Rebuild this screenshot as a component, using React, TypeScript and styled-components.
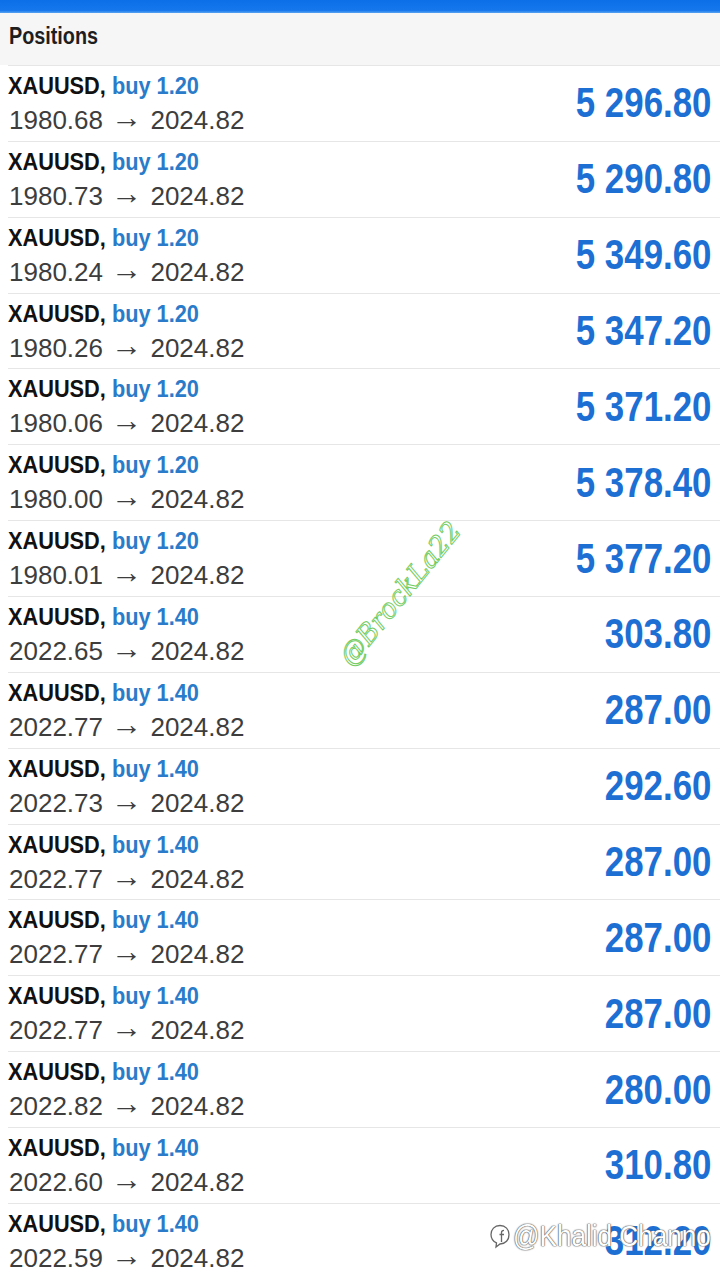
import React from "react";
import styled, { createGlobalStyle } from "styled-components";

const GlobalStyle = createGlobalStyle`
  html, body {
    margin: 0;
    padding: 0;
    background: #ffffff;
    font-family: "Liberation Sans", Arial, sans-serif;
  }
  #root { width: 720px; height: 1280px; overflow: hidden; }
`;

const Screen = styled.div`
  position: relative;
  width: 720px;
  height: 1280px;
  overflow: hidden;
  background: #ffffff;
`;

const TopBar = styled.div`
  height: 13px;
  background: linear-gradient(#0c6fe8, #1677ec 80%, #5aa3f2);
`;

const Header = styled.div`
  height: 52px;
  background: #f6f6f6;
  display: flex;
  align-items: flex-start;
  padding: 9px 0 0 9px;
  box-sizing: border-box;
`;

const HeaderTitle = styled.div`
  font-size: 23px;
  line-height: 28px;
  font-weight: 700;
  color: #1e1e1e;
  transform: scaleX(0.86);
  transform-origin: left center;
`;

const List = styled.div`
  display: flex;
  flex-direction: column;
`;

const Row = styled.div`
  height: 74.86px;
  margin-left: 8px;
  padding-right: 9px;
  border-top: 1px solid #e6e6e6;
  display: flex;
  align-items: stretch;
  justify-content: space-between;
`;

const Left = styled.div`
  display: flex;
  flex-direction: column;
  padding-top: 6px;
`;

const Title = styled.div`
  font-size: 24px;
  line-height: 28px;
  font-weight: 700;
  color: #111111;
  white-space: nowrap;
  transform: scaleX(0.906);
  transform-origin: left center;
`;

const Side = styled.span`
  color: #2a7bc9;
`;

const Prices = styled.div`
  font-size: 26px;
  line-height: 40px;
  color: #3d3d3d;
  white-space: nowrap;
  margin-left: 1px;
`;

const Arrow = styled.span`
  font-family: "Liberation Sans", Arial, sans-serif;
  font-size: 31px;
  line-height: 1;
  vertical-align: 1px;
  margin: 0 1px;
  color: #3d3d3d;
`;

const Profit = styled.div`
  align-self: center;
  font-size: 42px;
  line-height: 48px;
  font-weight: 700;
  color: #1d6fd4;
  white-space: nowrap;
  transform: scaleX(0.83);
  transform-origin: right center;
`;

const Signature = styled.div`
  position: absolute;
  left: 312px;
  top: 578px;
  font-family: "DejaVu Serif", serif;
  font-style: italic;
  font-size: 27px;
  color: transparent;
  -webkit-text-stroke: 1px #72cc60;
  transform: rotate(-51deg);
  transform-origin: center center;
  white-space: nowrap;
  pointer-events: none;
`;

const Credit = styled.div`
  position: absolute;
  left: 489px;
  top: 1219px;
  display: flex;
  align-items: center;
  gap: 2px;
  pointer-events: none;
`;

const CreditText = styled.span`
  display: inline-block;
  color: #ffffff;
  font-size: 30px;
  text-shadow: 0 0 1px #555, 0 0 1px #555, 0 0 2px #777;
  white-space: nowrap;
  transform: scaleX(0.87);
  transform-origin: left center;
`;

const positions = [
  { open: "1980.68", vol: "1.20", profit: "5 296.80" },
  { open: "1980.73", vol: "1.20", profit: "5 290.80" },
  { open: "1980.24", vol: "1.20", profit: "5 349.60" },
  { open: "1980.26", vol: "1.20", profit: "5 347.20" },
  { open: "1980.06", vol: "1.20", profit: "5 371.20" },
  { open: "1980.00", vol: "1.20", profit: "5 378.40" },
  { open: "1980.01", vol: "1.20", profit: "5 377.20" },
  { open: "2022.65", vol: "1.40", profit: "303.80" },
  { open: "2022.77", vol: "1.40", profit: "287.00" },
  { open: "2022.73", vol: "1.40", profit: "292.60" },
  { open: "2022.77", vol: "1.40", profit: "287.00" },
  { open: "2022.77", vol: "1.40", profit: "287.00" },
  { open: "2022.77", vol: "1.40", profit: "287.00" },
  { open: "2022.82", vol: "1.40", profit: "280.00" },
  { open: "2022.60", vol: "1.40", profit: "310.80" },
  { open: "2022.59", vol: "1.40", profit: "312.20" },
];

const FbIcon = () => (
  <svg width="22" height="26" viewBox="0 0 22 26" fill="none">
    <path
      d="M11 2.5 C5.5 2.5 2 6.5 2 11.5 C2 15.5 4.5 18.5 7.5 19.8 L7 24 L11 21 C16.5 21 20 17 20 11.5 C20 6.5 16.5 2.5 11 2.5 Z"
      stroke="#666"
      strokeWidth="1.3"
      fill="#fff"
    />
    <path
      d="M12.5 19 V11.5 H15 M12.5 11.5 V9.5 C12.5 8 13.3 7.3 15 7.3 M10.5 11.5 H12.5"
      stroke="#666"
      strokeWidth="1.3"
    />
  </svg>
);

export default function App() {
  return (
    <Screen>
      <GlobalStyle />
      <TopBar />
      <Header>
        <HeaderTitle>Positions</HeaderTitle>
      </Header>
      <List>
        {positions.map((p, i) => (
          <Row key={i}>
            <Left>
              <Title>
                XAUUSD, <Side>buy {p.vol}</Side>
              </Title>
              <Prices>
                {p.open} <Arrow>→</Arrow> 2024.82
              </Prices>
            </Left>
            <Profit>{p.profit}</Profit>
          </Row>
        ))}
      </List>
      <Signature>@BrockLa22</Signature>
      <Credit>
        <FbIcon />
        <CreditText>@Khalid Channo</CreditText>
      </Credit>
    </Screen>
  );
}
